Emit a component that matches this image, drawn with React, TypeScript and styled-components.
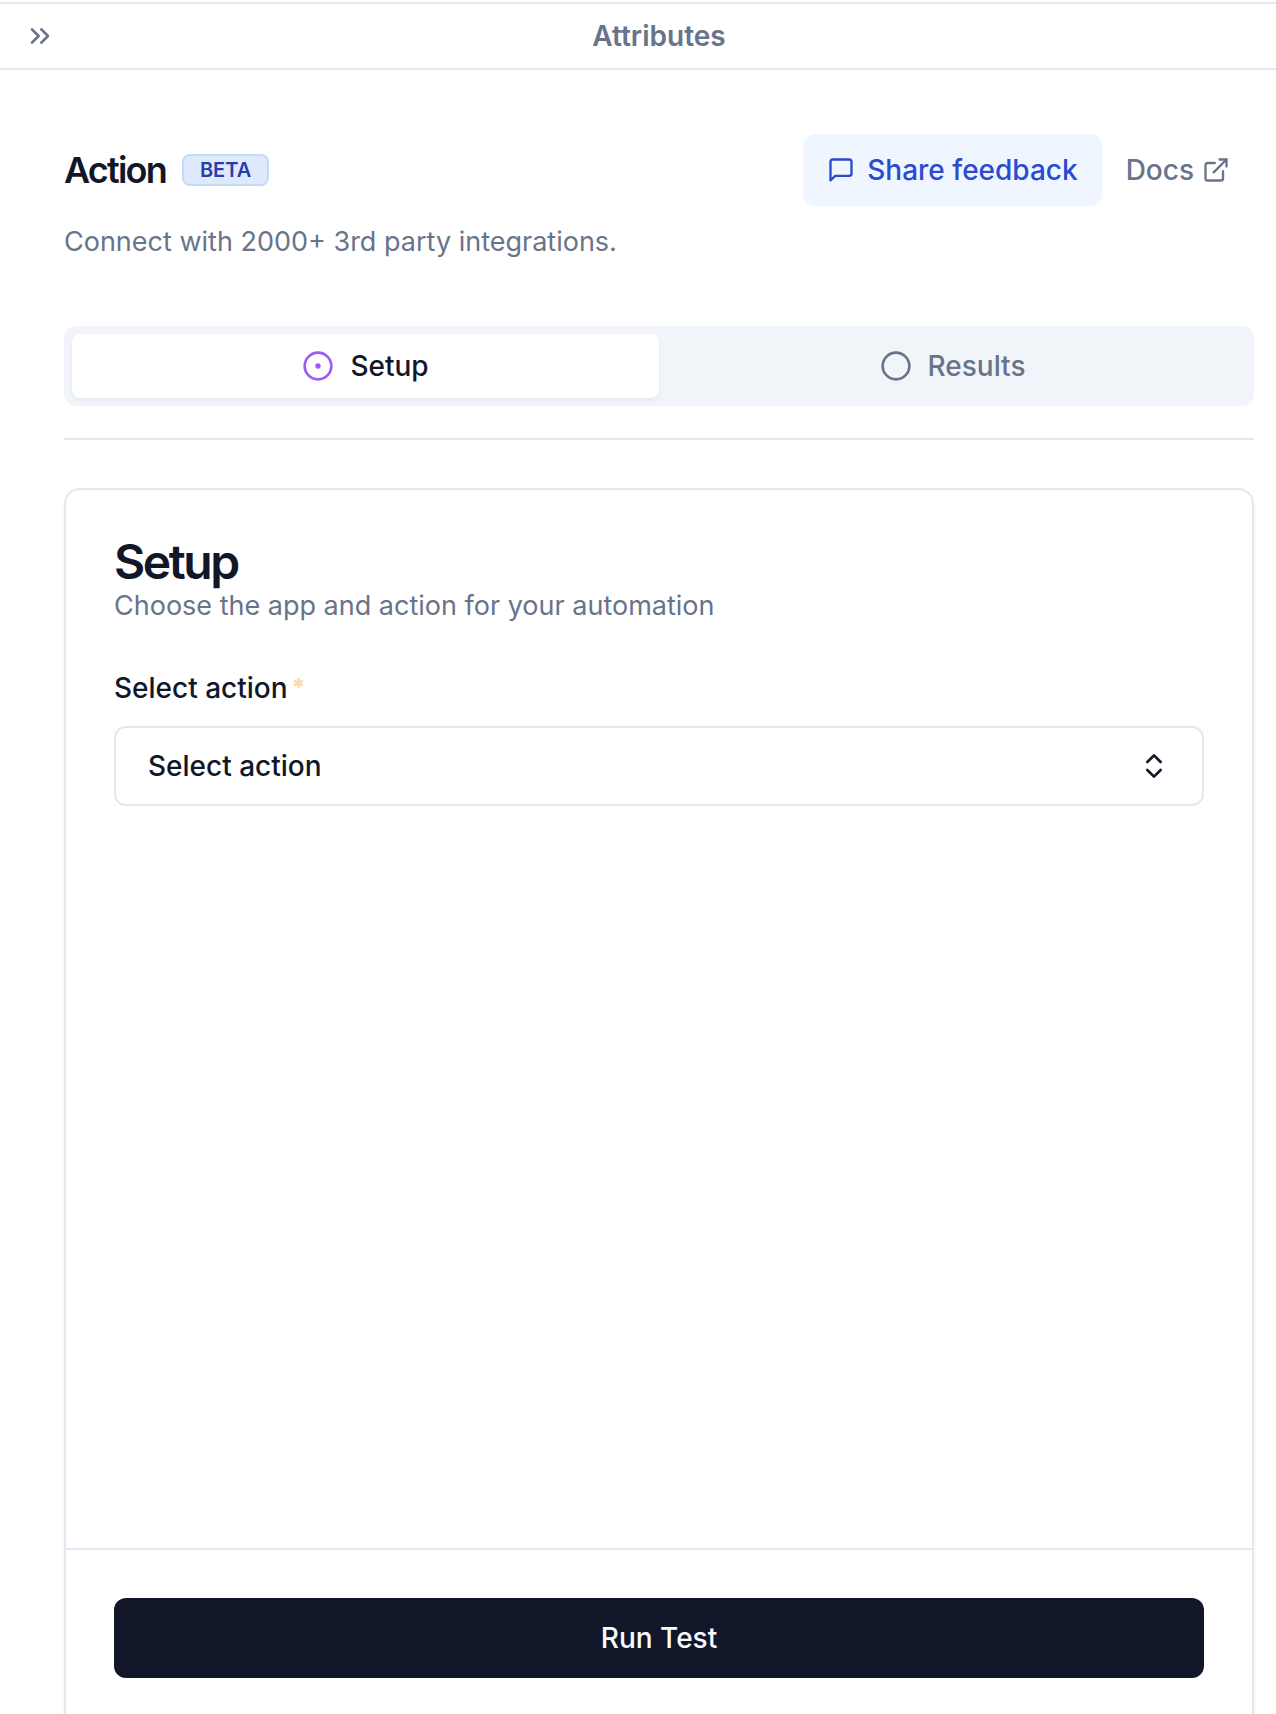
import React, { useState } from "react";
import styled, { createGlobalStyle } from "styled-components";
import { ChevronsRight, ChevronsUpDown, Circle, CircleDot, ExternalLink } from "lucide-react";

const color = {
  ink: "#111729",
  muted: "#677489",
  line: "#e2e8f0",
  surface: "#f1f5fa",
  white: "#ffffff",
  blueText: "#2a4bd0",
  blueSoft: "#eff6ff",
  badgeText: "#273daa",
  badgeFill: "#dee9fb",
  badgeLine: "#c3dbfb",
  purple: "#a059f5",
  required: "#fbd7ac",
};

const GlobalStyle = createGlobalStyle`
  *, *::before, *::after { box-sizing: border-box; }
  body {
    margin: 0;
    background: ${color.white};
    color: ${color.ink};
    font-family: Inter, "Liberation Sans", sans-serif;
    font-size: 28px;
    line-height: 40px;
    font-optical-sizing: none;
    -webkit-font-smoothing: antialiased;
  }
  button, select { font: inherit; color: inherit; margin: 0; }
  h1, h2, h3, p { margin: 0; }
  svg { display: block; flex-shrink: 0; }
`;

const Panel = styled.div`
  display: flex;
  flex-direction: column;
  height: 100vh;
  padding-top: 2px;
  overflow: hidden;
`;

const TopBar = styled.header`
  display: grid;
  grid-template-columns: 40px 1fr;
  align-items: center;
  flex-shrink: 0;
  height: 68px;
  padding: 0 22px 0 24px;
  border-top: 2px solid ${color.line};
  border-bottom: 2px solid ${color.line};
  color: ${color.muted};
`;

const TopBarTitle = styled.h1`
  font-size: 28px;
  font-weight: 600;
  text-align: center;
`;

const IconButton = styled.button`
  justify-self: start;
  padding: 0;
  border: 0;
  background: none;
  cursor: pointer;
`;

const Content = styled.main`
  flex: 1;
  min-height: 0;
  padding: 64px 22px 64px 64px;
  overflow-y: auto;
  scrollbar-width: none;
`;

const Heading = styled.div`
  display: flex;
  align-items: center;
  justify-content: space-between;
  padding-right: 24px;
`;

const HeadingGroup = styled.div<{ $gap: number }>`
  display: flex;
  align-items: center;
  gap: ${({ $gap }) => $gap}px;
`;

const Title = styled.h2`
  font-size: 36px;
  font-weight: 600;
  letter-spacing: -0.05em;
`;

const Badge = styled.span`
  padding: 0 16px;
  border: 2px solid ${color.badgeLine};
  border-radius: 8px;
  background: ${color.badgeFill};
  color: ${color.badgeText};
  font-size: 20px;
  font-weight: 600;
  line-height: 28px;
`;

const FeedbackButton = styled.button`
  display: flex;
  align-items: center;
  gap: 12px;
  padding: 16px 24px;
  border: 0;
  border-radius: 12px;
  background: ${color.blueSoft};
  color: ${color.blueText};
  font-weight: 500;
  cursor: pointer;
`;

const DocsLink = styled.a`
  display: flex;
  align-items: center;
  gap: 8px;
  color: ${color.muted};
  font-weight: 500;
  text-decoration: none;
`;

const Description = styled.p`
  color: ${color.muted};
  font-size: 27px;
`;

const Intro = styled.section`
  display: grid;
  gap: 16px;
  margin-bottom: 64px;
`;

const Tabs = styled.div`
  display: grid;
  grid-template-columns: 1fr 1fr;
  padding: 8px;
  border-radius: 12px;
  background: ${color.surface};
`;

const Tab = styled.button<{ $active: boolean }>`
  display: flex;
  align-items: center;
  justify-content: center;
  gap: 16px;
  padding: 12px 24px;
  border: 0;
  border-radius: 8px;
  background: ${({ $active }) => ($active ? color.white : "transparent")};
  box-shadow: ${({ $active }) => ($active ? "0 2px 4px rgba(0, 0, 0, 0.05)" : "none")};
  color: ${({ $active }) => ($active ? color.ink : color.muted)};
  font-weight: 500;
  cursor: pointer;

  svg { color: ${({ $active }) => ($active ? color.purple : color.muted)}; }
`;

const Divider = styled.hr`
  height: 2px;
  margin: 32px 0 48px;
  border: 0;
  background: ${color.line};
`;

const Card = styled.section`
  display: flex;
  flex-direction: column;
  min-height: calc(100vh - 474px);
  border: 2px solid ${color.line};
  border-radius: 16px;
  box-shadow: 0 2px 4px rgba(0, 0, 0, 0.05);
`;

const CardBody = styled.div`
  flex: 1;
  padding: 48px;
`;

const CardTitle = styled.h3`
  font-size: 48px;
  font-weight: 600;
  line-height: 48px;
  letter-spacing: -0.05em;
`;

const Field = styled.div`
  display: grid;
  gap: 24px;
  margin-top: 48px;
`;

const Label = styled.label`
  display: flex;
  gap: 4px;
  font-weight: 500;
  line-height: 28px;
`;

const Required = styled.span`
  color: ${color.required};
  font-size: 24px;
  font-weight: 800;
`;

const SelectBox = styled.div`
  display: grid;
  align-items: center;

  & > * { grid-area: 1 / 1; }
  svg {
    justify-self: end;
    margin-right: 34px;
    pointer-events: none;
  }
`;

const Select = styled.select`
  width: 100%;
  height: 80px;
  padding: 0 80px 0 32px;
  border: 2px solid ${color.line};
  border-radius: 12px;
  background: ${color.white};
  font-weight: 500;
  appearance: none;
  cursor: pointer;
`;

const CardFooter = styled.footer`
  padding: 48px;
  border-top: 2px solid ${color.line};
`;

const RunButton = styled.button`
  width: 100%;
  padding: 20px 32px;
  border: 0;
  border-radius: 12px;
  background: ${color.ink};
  color: #f8fafc;
  font-weight: 500;
  cursor: pointer;
`;

function FeedbackIcon() {
  return (
    <svg width="28" height="28" viewBox="0 0 24 24" fill="none" stroke="currentColor" strokeWidth="2" strokeLinecap="round" strokeLinejoin="round" aria-hidden="true">
      <path d="M21 15a2 2 0 0 1-2 2H7l-4 4V5a2 2 0 0 1 2-2h14a2 2 0 0 1 2 2z" />
    </svg>
  );
}

export default function App() {
  const [tab, setTab] = useState<"setup" | "results">("setup");

  return (
    <>
      <GlobalStyle />
      <Panel>
        <TopBar>
          <IconButton type="button" aria-label="Collapse panel">
            <ChevronsRight size={32} />
          </IconButton>
          <TopBarTitle>Attributes</TopBarTitle>
        </TopBar>
        <Content>
          <Intro>
            <Heading>
              <HeadingGroup $gap={16}>
                <Title>Action</Title>
                <Badge>BETA</Badge>
              </HeadingGroup>
              <HeadingGroup $gap={24}>
                <FeedbackButton type="button">
                  <FeedbackIcon />
                  Share feedback
                </FeedbackButton>
                <DocsLink href="#docs">
                  Docs
                  <ExternalLink size={28} />
                </DocsLink>
              </HeadingGroup>
            </Heading>
            <Description>Connect with 2000+ 3rd party integrations.</Description>
          </Intro>
          <Tabs role="tablist">
            <Tab type="button" role="tab" aria-selected={tab === "setup"} $active={tab === "setup"} onClick={() => setTab("setup")}>
              <CircleDot size={32} />
              Setup
            </Tab>
            <Tab type="button" role="tab" aria-selected={tab === "results"} $active={tab === "results"} onClick={() => setTab("results")}>
              <Circle size={32} />
              Results
            </Tab>
          </Tabs>
          <Divider />
          <Card>
            <CardBody>
              <CardTitle>Setup</CardTitle>
              <Description>Choose the app and action for your automation</Description>
              <Field>
                <Label htmlFor="action">
                  Select action
                  <Required aria-hidden="true">*</Required>
                </Label>
                <SelectBox>
                  <Select id="action" required defaultValue="">
                    <option value="">Select action</option>
                  </Select>
                  <ChevronsUpDown size={32} />
                </SelectBox>
              </Field>
            </CardBody>
            <CardFooter>
              <RunButton type="button">Run Test</RunButton>
            </CardFooter>
          </Card>
        </Content>
      </Panel>
    </>
  );
}
